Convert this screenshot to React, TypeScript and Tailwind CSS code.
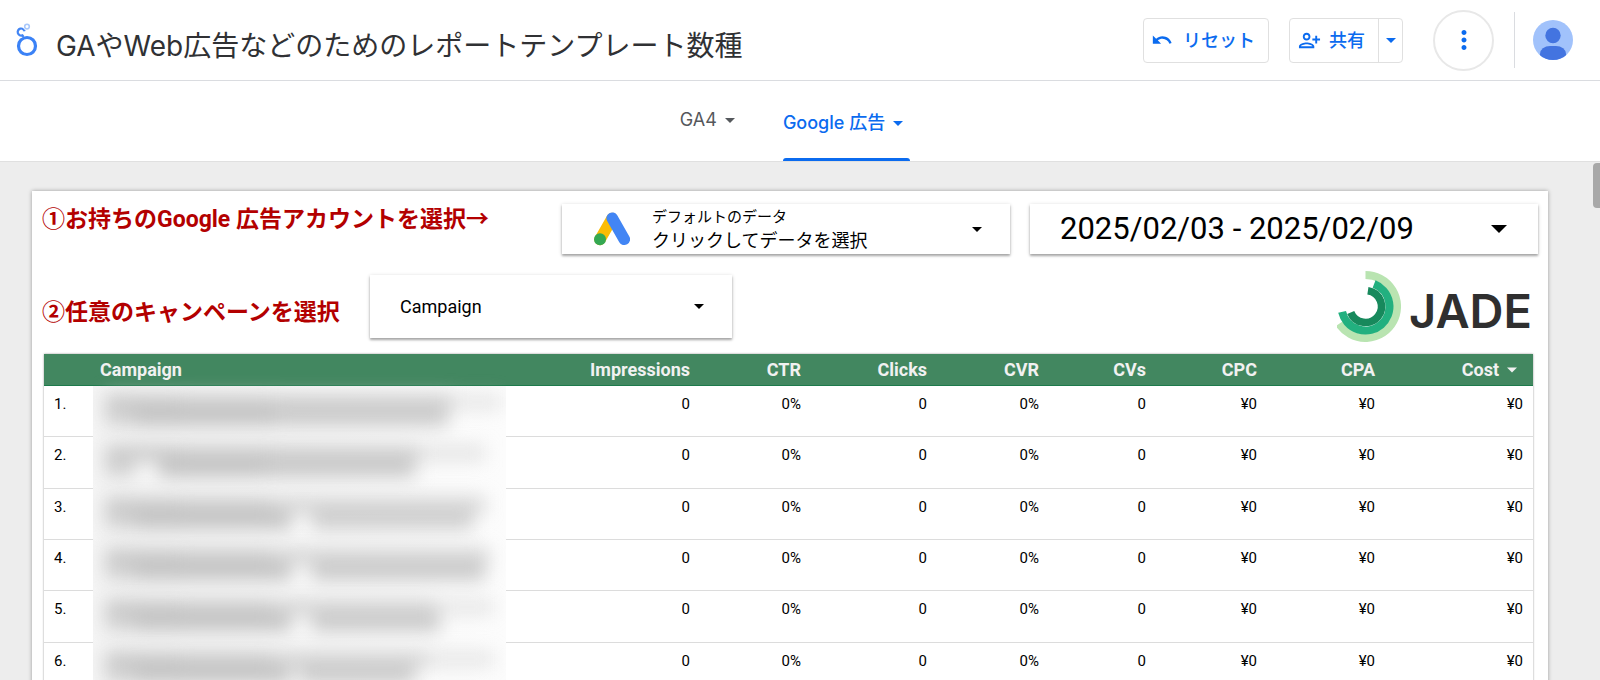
import { MdMoreVert, MdOutlinePersonAddAlt1, MdUndo } from "react-icons/md";

type Smear = { line: 0 | 1; left: number; width: number; alpha: number };
type Campaign = { id: number; smears: Smear[] };

const base: Smear[] = [
  { line: 0, left: 3, width: 18, alpha: 0.85 },
  { line: 0, left: 21, width: 22, alpha: 0.8 },
  { line: 1, left: 3, width: 7, alpha: 0.7 },
];

const campaigns: Campaign[] = [
  { id: 1, smears: [...base, { line: 0, left: 43, width: 44, alpha: 0.75 }, { line: 0, left: 87, width: 12, alpha: 0.35 }, { line: 1, left: 10, width: 34, alpha: 1 }, { line: 1, left: 44, width: 42, alpha: 0.85 }] },
  { id: 2, smears: [...base, { line: 0, left: 43, width: 36, alpha: 0.75 }, { line: 0, left: 79, width: 16, alpha: 0.4 }, { line: 1, left: 16, width: 26, alpha: 1 }, { line: 1, left: 42, width: 36, alpha: 0.9 }] },
  { id: 3, smears: [...base, { line: 0, left: 43, width: 52, alpha: 0.65 }, { line: 1, left: 10, width: 38, alpha: 1 }, { line: 1, left: 53, width: 39, alpha: 0.8 }] },
  { id: 4, smears: [...base, { line: 0, left: 43, width: 53, alpha: 0.65 }, { line: 1, left: 10, width: 38, alpha: 1 }, { line: 1, left: 53, width: 42, alpha: 0.9 }] },
  { id: 5, smears: [...base, { line: 0, left: 43, width: 40, alpha: 0.65 }, { line: 0, left: 83, width: 14, alpha: 0.35 }, { line: 1, left: 10, width: 38, alpha: 1 }, { line: 1, left: 53, width: 31, alpha: 0.9 }] },
  { id: 6, smears: [...base, { line: 0, left: 43, width: 38, alpha: 0.65 }, { line: 0, left: 81, width: 16, alpha: 0.35 }, { line: 1, left: 10, width: 38, alpha: 1 }, { line: 1, left: 50, width: 28, alpha: 0.9 }] },
];

const metrics = ["Impressions", "CTR", "Clicks", "CVR", "CVs", "CPC", "CPA"];
const values = ["0", "0%", "0", "0%", "0", "¥0", "¥0", "¥0"];

function LookerLogo() {
  return (
    <svg viewBox="0 0 22 34" className="h-[34px] w-[22px] shrink-0" fill="none" aria-hidden="true">
      <circle cx="11" cy="23" r="8.5" stroke="#3b82f6" strokeWidth="3.2" />
      <circle cx="5.2" cy="9" r="5.4" fill="#fff" />
      <path d="M8.6 8.2A3.5 3.5 0 1 0 6.4 12.3L7.6 14" stroke="#4285f4" strokeWidth="2.2" />
      <circle cx="11" cy="3.6" r="3.8" fill="#fff" />
      <circle cx="11" cy="3.6" r="2.3" stroke="#a9c8fb" strokeWidth="1.6" />
    </svg>
  );
}

function AdsLogo() {
  return (
    <svg viewBox="0 0 36 34" className="h-[34px] w-9 shrink-0" fill="none" strokeLinecap="round" aria-hidden="true">
      <path d="M6 27.5 18 6.5" stroke="#fbbc04" strokeWidth="11.5" />
      <path d="M18.2 6.2 30.3 27.3" stroke="#4285f4" strokeWidth="11.6" />
      <circle cx="6" cy="27.3" r="6" fill="#34a853" />
    </svg>
  );
}

function JadeLogo() {
  return (
    <div className="flex items-center gap-2">
      <svg viewBox="0 0 64 71" className="h-[71px] w-16" fill="none" aria-hidden="true">
        <path d="M28.5 4A31.5 31.5 0 1 1 2.2 52.8" stroke="#b9e4b1" strokeWidth="8" />
        <path d="M37.1 13.1A24 24 0 1 1 5.1 40.9" stroke="#22b07f" strokeWidth="8" />
        <path d="M30.9 19.7A16 16 0 1 1 13.7 41.5" stroke="#17895c" strokeWidth="7.6" />
      </svg>
      <span className="pt-2 font-['Inter',sans-serif] text-[47px] leading-[60px] font-semibold text-[#2f2f2f]">JADE</span>
    </div>
  );
}

function Caret({ className }: { className: string }) {
  return (
    <svg viewBox="0 0 10 5" className={className} fill="currentColor" aria-hidden="true">
      <path d="M0 0h10L5 5z" />
    </svg>
  );
}

export default function App() {
  const card = "bg-white shadow-[0_1px_4px_rgba(0,0,0,0.2),0_2px_2px_rgba(0,0,0,0.25)]";
  return (
    <div className="flex h-screen flex-col overflow-hidden bg-white font-['Roboto','Noto_Sans_CJK_JP',sans-serif] text-black">
      <header className="flex h-[81px] shrink-0 items-center border-b border-[#dadce0] pr-[27px] pl-4 font-['Lato','Noto_Sans_CJK_JP',sans-serif]">
        <LookerLogo />
        <h1 className="ml-[18px] pt-3 font-['Inter','Noto_Sans_CJK_JP',sans-serif] text-[28px] leading-9 font-normal whitespace-nowrap text-[#303134]">GAやWeb広告などのためのレポートテンプレート数種</h1>
        <div className="ml-auto flex items-center text-[18px] leading-6 font-medium text-[#0b6bef]">
          <button type="button" className="flex h-[45px] w-[126px] items-center gap-2.5 rounded border border-[#e0e0e0] pl-[7px]">
            <MdUndo className="size-[22px]" />
            リセット
          </button>
          <div className="ml-5 flex h-[45px] w-[114px] rounded border border-[#e0e0e0]">
            <button type="button" className="flex flex-1 items-center gap-2 pl-2">
              <MdOutlinePersonAddAlt1 className="size-[23px]" />
              共有
            </button>
            <button type="button" aria-label="共有オプション" className="flex w-6 items-center justify-center border-l border-[#e0e0e0]">
              <Caret className="h-[5px] w-[10px]" />
            </button>
          </div>
          <button type="button" aria-label="その他" className="ml-[30px] flex size-[61px] items-center justify-center rounded-full border-2 border-[#e8e8e8]">
            <MdMoreVert className="size-[30px]" />
          </button>
          <span className="ml-5 h-14 border-l border-[#dadce0]" />
          <button type="button" aria-label="アカウント" className="ml-[18px]">
            <svg viewBox="0 0 40 40" className="size-10" aria-hidden="true">
              <clipPath id="avatar"><circle cx="20" cy="20" r="20" /></clipPath>
              <g clipPath="url(#avatar)">
                <rect width="40" height="40" fill="#a1c2fb" />
                <circle cx="20" cy="15.5" r="7.7" fill="#4374e0" />
                <rect x="7" y="26" width="26" height="18" rx="10" ry="8" fill="#4374e0" />
              </g>
            </svg>
          </button>
        </div>
      </header>

      <nav className="flex h-[81px] shrink-0 items-end justify-center gap-12 border-b border-[#e0e0e0] pr-2.5 font-['Inter','Noto_Sans_CJK_JP',sans-serif] text-[18px] leading-6">
        <button type="button" className="flex items-center gap-2 pb-[29px] text-[#55585c]">
          GA4
          <Caret className="h-[5px] w-[10px]" />
        </button>
        <button type="button" className="flex flex-col font-medium text-[#0b6bef]">
          <span className="flex items-center gap-2 pr-[7px] pb-[23px]">
            Google 広告
            <Caret className="h-[5px] w-[10px]" />
          </span>
          <span className="h-[3px] w-full rounded-t bg-[#0b6bef]" />
        </button>
      </nav>

      <main className="relative flex-1 overflow-hidden bg-[#ededed] pt-[29px] pr-[52px] pl-8">
        <span className="absolute top-px right-0 h-[45px] w-[7px] rounded-l bg-[#a8a8a8]" />
        <section className="bg-white pt-[13px] pb-8 shadow-[0_0_4px_rgba(0,0,0,0.35)]">
          <div className="flex items-start gap-5 pr-2.5 pl-2.5">
            <p className="flex-1 text-[23px] leading-8 font-bold whitespace-nowrap text-[#b30000]">①お持ちのGoogle 広告アカウントを選択→</p>
            <button type="button" className={`flex h-[50px] w-[448px] items-center pr-7 pl-8 text-left ${card}`}>
              <AdsLogo />
              <span className="ml-[22px] flex-1">
                <span className="block text-[15px] leading-6">デフォルトのデータ</span>
                <span className="block text-[18px] leading-6">クリックしてデータを選択</span>
              </span>
              <Caret className="h-[5px] w-[10px]" />
            </button>
            <button type="button" className={`flex h-[50px] w-[508px] items-center justify-between pr-[31px] pl-[30px] text-[31px] ${card}`}>
              2025/02/03 - 2025/02/09
              <Caret className="h-2 w-4" />
            </button>
          </div>

          <div className="mt-[17px] flex items-center pr-4 pl-2.5">
            <label htmlFor="campaign" className="w-[328px] pt-3 text-[23px] leading-8 font-bold whitespace-nowrap text-[#b30000]">②任意のキャンペーンを選択</label>
            <div className={`grid w-[362px] items-center ${card}`}>
              <select id="campaign" className="col-start-1 row-start-1 h-[63px] w-full appearance-none bg-transparent pl-[30px] text-[18px]">
                <option>Campaign</option>
              </select>
              <Caret className="pointer-events-none col-start-1 row-start-1 mr-7 h-[5px] w-[10px] justify-self-end" />
            </div>
            <div className="ml-auto"><JadeLogo /></div>
          </div>

          <div className="mt-3 pr-[15px] pl-3">
            <table className="h-[340px] w-full table-fixed border-separate border-spacing-0 shadow-[0_0_2px_rgba(0,0,0,0.4)]">
              <colgroup>
                <col className="w-[49px]" />
                <col />
                <col className="w-[194px]" />
                <col className="w-[111px]" />
                <col className="w-[126px]" />
                <col className="w-[112px]" />
                <col className="w-[107px]" />
                <col className="w-[111px]" />
                <col className="w-[118px]" />
                <col className="w-[148px]" />
              </colgroup>
              <thead>
                <tr className="h-8 bg-[#428760] text-[18px] leading-6 text-[#f1f1f1]">
                  <th className="border-b border-[#1d7a4b]" aria-label="No." />
                  <th className="border-b border-[#1d7a4b] pl-[7px] text-left font-bold">Campaign</th>
                  {metrics.map((m) => (
                    <th key={m} className="border-b border-[#1d7a4b] pr-2.5 text-right font-bold">{m}</th>
                  ))}
                  <th className="border-b border-[#1d7a4b] pr-4 font-bold">
                    <span className="flex items-center justify-end gap-2">
                      Cost
                      <Caret className="h-[6px] w-[10px]" />
                    </span>
                  </th>
                </tr>
              </thead>
              <tbody className="text-[15px] leading-5">
                {campaigns.map((c) => (
                  <tr key={c.id} className="align-top">
                    <td className="border-b border-[#dcdcdc] pt-2 pl-2.5">{c.id}.</td>
                    <td className="overflow-x-clip bg-linear-to-r from-[#f5f5f5] to-[#fcfcfc] p-0 pt-2">
                      <div className="grid h-8 grid-rows-2 blur-[9px]">
                        {[0, 1].map((line) => (
                          <div key={line} className="relative">
                            {c.smears.filter((s) => s.line === line).map((s) => (
                              <span
                                key={s.left}
                                className="absolute inset-y-0 bg-[#c2c2c2]"
                                style={{ left: `${s.left}%`, width: `${s.width}%`, opacity: s.alpha }}
                              />
                            ))}
                          </div>
                        ))}
                      </div>
                    </td>
                    {values.map((v, i) => (
                      <td key={i} className="border-b border-[#dcdcdc] pt-2 pr-2.5 text-right">{v}</td>
                    ))}
                  </tr>
                ))}
              </tbody>
            </table>
          </div>
        </section>
      </main>
    </div>
  );
}
